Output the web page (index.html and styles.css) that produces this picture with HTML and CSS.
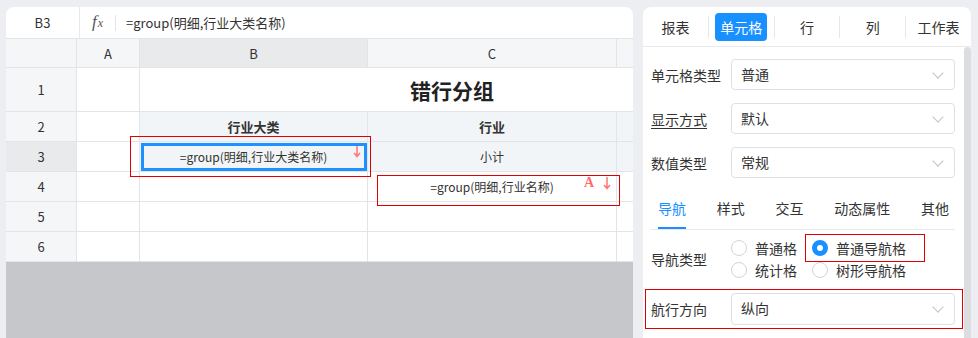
FILE: index.html
```html
<!DOCTYPE html>
<html lang="zh-CN">

<head>
    <meta charset="UTF-8">
    <meta name="viewport" content="width=device-width, initial-scale=1.0">
    <title>错行分组</title>

    <link rel="stylesheet" href="styles.css">

</head>

<body>
    <div class="app">
        <!-- 左边：表格 -->
        <div class="sheet">
            <div class="formula-bar">
                <div class="name-box">B3</div>
                <div class="fx">f<span>x</span></div>
                <div class="formula">=group(明细,行业大类名称)</div>
            </div>

            <div class="grid-wrap">
                <div class="grid">
                    <div class="hd corner"></div>
                    <div class="hd">A</div>
                    <div class="hd on">B</div>
                    <div class="hd">C</div>
                    <div class="hd"></div>

                    <div class="hd row1">1</div>
                    <div class="cell"></div>
                    <div class="cell title">错行分组</div>

                    <div class="hd">2</div>
                    <div class="cell"></div>
                    <div class="cell tint bold">行业大类</div>
                    <div class="cell tint bold">行业</div>
                    <div class="cell tint"></div>

                    <div class="hd on">3</div>
                    <div class="cell"></div>
                    <div class="cell tint sel">
                        =group(明细,行业大类名称)
                        <span class="marks">
                            <svg class="arrow" width="8" height="14" viewBox="0 0 8 14"><path d="M4 1v11M1 9l3 3.5L7 9" fill="none" stroke="#ff7a7a" stroke-width="1.6"/></svg>
                        </span>
                    </div>
                    <div class="cell tint">小计</div>
                    <div class="cell tint"></div>

                    <div class="hd">4</div>
                    <div class="cell"></div>
                    <div class="cell"></div>
                    <div class="cell">
                        =group(明细,行业名称)
                        <span class="marks">
                            <b class="mark-a">A</b>
                            <svg class="arrow" width="8" height="14" viewBox="0 0 8 14"><path d="M4 1v11M1 9l3 3.5L7 9" fill="none" stroke="#ff7a7a" stroke-width="1.6"/></svg>
                        </span>
                    </div>
                    <div class="cell"></div>

                    <div class="hd">5</div>
                    <div class="cell"></div>
                    <div class="cell"></div>
                    <div class="cell"></div>
                    <div class="cell"></div>

                    <div class="hd">6</div>
                    <div class="cell"></div>
                    <div class="cell"></div>
                    <div class="cell"></div>
                    <div class="cell"></div>
                </div>

                <!-- 标注框 -->
                <div class="note note-b3"></div>
                <div class="note note-c4"></div>

                <div class="blank"></div>
            </div>
        </div>

        <!-- 右边：属性面板 -->
        <div class="panel">
            <div class="tabs">
                <div class="tab"><span>报表</span></div>
                <div class="tab"><span class="active">单元格</span></div>
                <div class="tab"><span>行</span></div>
                <div class="tab"><span>列</span></div>
                <div class="tab"><span>工作表</span></div>
            </div>

            <div class="panel-body">
                <div class="content">
                    <div class="field">
                        <label>单元格类型</label>
                        <div class="select">普通</div>
                    </div>
                    <div class="field">
                        <label class="link">显示方式</label>
                        <div class="select">默认</div>
                    </div>
                    <div class="field">
                        <label>数值类型</label>
                        <div class="select">常规</div>
                    </div>

                    <div class="sub-tabs">
                        <span class="active">导航</span>
                        <span>样式</span>
                        <span>交互</span>
                        <span>动态属性</span>
                        <span>其他</span>
                    </div>

                    <div class="field radio-field">
                        <label>导航类型</label>
                        <div class="radios">
                            <div class="radio"><i></i>普通格</div>
                            <div class="radio checked"><i></i>普通导航格</div>
                            <div class="radio"><i></i>统计格</div>
                            <div class="radio"><i></i>树形导航格</div>
                        </div>
                    </div>

                    <div class="field boxed">
                        <label>航行方向</label>
                        <div class="select">纵向</div>
                    </div>
                </div>
                <div class="scrollbar"></div>
            </div>
        </div>
    </div>
</body>

</html>
```

FILE: styles.css
```css
* {
    margin: 0;
    padding: 0;
    box-sizing: border-box;
}

body {
    background: #eceef2;
    font-family: "Noto Sans CJK SC", "Noto Sans", sans-serif;
    color: #333;
    overflow: hidden;
}

.app {
    display: flex;
    gap: 10px;
    height: 338px;
    padding: 7px 0 0 6px;
    overflow: hidden;
}

/* ---------- 表格 ---------- */

.sheet {
    width: 627px;
    height: 340px;
    background: #fff;
    border-radius: 8px 8px 0 0;
    overflow: hidden;
    display: flex;
    flex-direction: column;
}

.formula-bar {
    height: 32px;
    display: flex;
    align-items: center;
    border-bottom: 1px solid #e3e4e8;
    font-size: 13px;
}

.name-box {
    width: 74px;
    height: 100%;
    line-height: 31px;
    text-align: center;
    border-right: 1px solid #e9eaee;
}

.fx {
    width: 36px;
    height: 16px;
    padding-left: 12px;
    font-family: "Liberation Serif", serif;
    font-style: italic;
    font-size: 17px;
    line-height: 14px;
    color: #555;
    border-right: 1px solid #e3e4e8;
}

.fx span {
    font-size: 12px;
    margin-left: 1px;
}

.formula {
    padding-left: 10px;
}

.grid-wrap {
    flex: 1;
    position: relative;
    display: flex;
    flex-direction: column;
}

.grid {
    display: grid;
    grid-template-columns: 71px 63px 228px 249px 148px;
    grid-template-rows: 29px 44px repeat(5, 30px);
    width: 759px;
    font-size: 12px;
}

.hd,
.cell {
    border-right: 1px solid #e3e4e8;
    border-bottom: 1px solid #e3e4e8;
    display: flex;
    align-items: center;
    justify-content: center;
    position: relative;
}

.hd {
    background: #f5f6f8;
    font-size: 13px;
}

.hd.on {
    background: #e9eaec;
}

.cell {
    background: #fff;
}

.tint {
    background: #f2f5f7;
}

.bold {
    font-weight: bold;
    font-size: 13px;
}

.title {
    grid-column: 3 / 6;
    font-size: 21px;
    font-weight: bold;
    color: #222;
}

.sel::after {
    content: "";
    position: absolute;
    left: 1px;
    top: 1px;
    right: 0;
    bottom: 0;
    border: 3px solid #1e90ff;
}

.marks {
    position: absolute;
    right: 5px;
    top: 3px;
    display: flex;
    align-items: center;
    gap: 9px;
}

.sel .marks {
    right: 6px;
    top: 2px;
}

.mark-a {
    font-family: "Liberation Serif", serif;
    font-size: 14px;
    color: #ff6b6b;
}

.note {
    position: absolute;
    border: 1px solid #e00000;
}

.note-b3 {
    left: 124px;
    top: 97px;
    width: 241px;
    height: 41px;
}

.note-c4 {
    left: 371px;
    top: 136px;
    width: 243px;
    height: 31px;
}

.blank {
    flex: 1;
    background: #c6c7cb;
}

/* ---------- 属性面板 ---------- */

.panel {
    width: 328px;
    height: 340px;
    background: #fff;
    border-radius: 8px 8px 0 0;
    overflow: hidden;
    display: flex;
    flex-direction: column;
}

.tabs {
    height: 40px;
    display: flex;
    align-items: center;
    border-bottom: 1px solid #e8e9ed;
    font-size: 14px;
}

.tab {
    flex: 1;
    text-align: center;
    border-right: 1px solid #e5e6ea;
    height: 22px;
    display: flex;
    align-items: center;
    justify-content: center;
}

.tab:last-child {
    border-right: 0;
}

.tab span {
    padding: 3px 5px;
    border-radius: 4px;
    line-height: 22px;
}

.tab .active {
    background: #1890ff;
    color: #fff;
}

.panel-body {
    flex: 1;
    display: flex;
}

.content {
    flex: 1;
    padding: 12px 9px 0 8px;
}

.scrollbar {
    width: 7px;
    background: #dcdde1;
    border-radius: 4px 4px 0 0;
}

.field {
    display: flex;
    align-items: center;
    margin-bottom: 13px;
    font-size: 14px;
}

.field label {
    width: 80px;
}

.field .link {
    text-decoration: underline;
    text-underline-offset: 3px;
}

.select {
    flex: 1;
    height: 31px;
    border: 1px solid #dcdfe6;
    border-radius: 4px;
    padding-left: 9px;
    line-height: 29px;
    position: relative;
}

.select::after {
    content: "";
    position: absolute;
    right: 12px;
    top: 9px;
    width: 7px;
    height: 7px;
    border-right: 1px solid #c0c4cc;
    border-bottom: 1px solid #c0c4cc;
    transform: rotate(45deg);
}

.sub-tabs {
    display: flex;
    justify-content: space-between;
    padding: 0 6px 0 7px;
    margin-top: 2px;
    border-bottom: 1px solid #e8e9ed;
    font-size: 14px;
}

.sub-tabs span {
    padding: 7px 0 11px;
}

.sub-tabs .active {
    color: #1890ff;
    border-bottom: 2px solid #1890ff;
    padding-bottom: 9px;
}

.radio-field {
    margin: 9px 0 0;
    height: 40px;
}

.radios {
    display: grid;
    grid-template-columns: 81px 100px;
    row-gap: 2px;
    position: relative;
}

.radio {
    display: flex;
    align-items: center;
    gap: 8px;
    height: 20px;
}

.radio i {
    width: 16px;
    height: 16px;
    border: 1px solid #d0d3d9;
    border-radius: 50%;
}

.radio.checked {
    position: relative;
}

.radio.checked i {
    border: 5px solid #1890ff;
    background: #fff;
}

/* 标注框 */
.radio.checked::after {
    content: "";
    position: absolute;
    left: -7px;
    top: -4px;
    width: 118px;
    height: 26px;
    border: 1px solid #e00000;
}

.field.boxed {
    margin: 10px -8px 0 -6px;
    padding: 3px 7px 3px 5px;
    border: 1px solid #e00000;
}

.field.boxed .select {
    height: 32px;
}
```
